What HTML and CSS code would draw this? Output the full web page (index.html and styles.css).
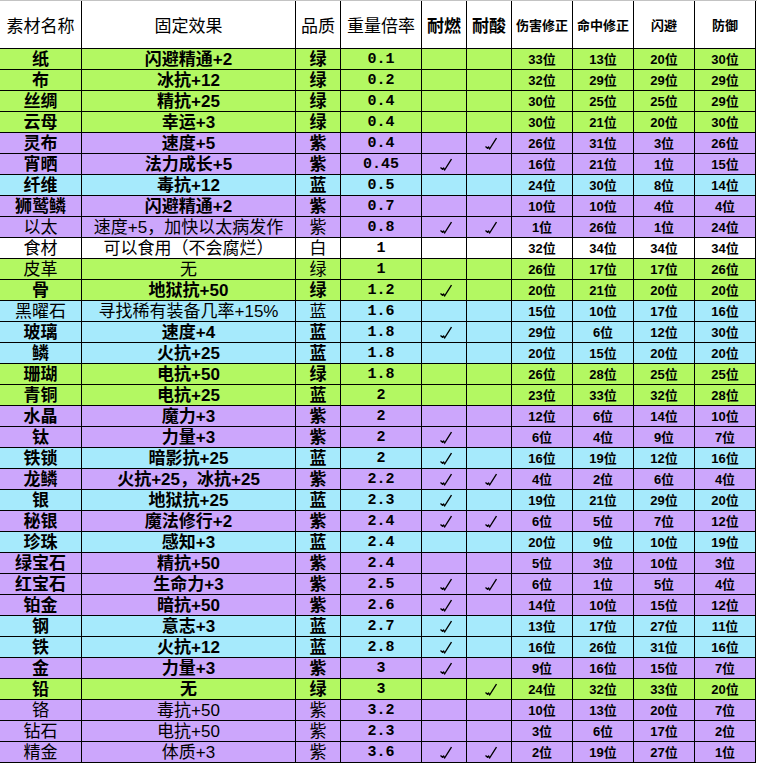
FILE: index.html
```html
<!DOCTYPE html>
<html lang="zh-CN">
<head>
<meta charset="utf-8">
<title>素材表</title>
<link rel="stylesheet" href="styles.css">
</head>
<body>
<div class="sheet">
<div class="grid">
<div class="row head"><div>素材名称</div><div>固定效果</div><div>品质</div><div>重量倍率</div><div class="bd">耐燃</div><div class="bd">耐酸</div><div class="sm">伤害修正</div><div class="sm">命中修正</div><div class="sm">闪避</div><div class="sm">防御</div></div>
<div class="row g"><div>纸</div><div>闪避精通+2</div><div>绿</div><div>0.1</div><div></div><div></div><div>33位</div><div>13位</div><div>20位</div><div>30位</div></div>
<div class="row g"><div>布</div><div>冰抗+12</div><div>绿</div><div>0.2</div><div></div><div></div><div>32位</div><div>29位</div><div>29位</div><div>29位</div></div>
<div class="row g"><div>丝绸</div><div>精抗+25</div><div>绿</div><div>0.4</div><div></div><div></div><div>30位</div><div>25位</div><div>25位</div><div>29位</div></div>
<div class="row g"><div>云母</div><div>幸运+3</div><div>绿</div><div>0.4</div><div></div><div></div><div>30位</div><div>21位</div><div>20位</div><div>30位</div></div>
<div class="row p"><div>灵布</div><div>速度+5</div><div>紫</div><div>0.4</div><div></div><div><svg class="ck" viewBox="0 0 12 13"><path d="M0.5 9.5 2.5 11.2 3.6 10 4.6 12 11.5 1"/></svg></div><div>26位</div><div>31位</div><div>3位</div><div>26位</div></div>
<div class="row p"><div>宵晒</div><div>法力成长+5</div><div>紫</div><div>0.45</div><div><svg class="ck" viewBox="0 0 12 13"><path d="M0.5 9.5 2.5 11.2 3.6 10 4.6 12 11.5 1"/></svg></div><div></div><div>16位</div><div>21位</div><div>1位</div><div>15位</div></div>
<div class="row b"><div>纤维</div><div>毒抗+12</div><div>蓝</div><div>0.5</div><div></div><div></div><div>24位</div><div>30位</div><div>8位</div><div>14位</div></div>
<div class="row p"><div>狮鹫鳞</div><div>闪避精通+2</div><div>紫</div><div>0.7</div><div></div><div></div><div>10位</div><div>10位</div><div>4位</div><div>4位</div></div>
<div class="row p thin"><div>以太</div><div>速度+5，加快以太病发作</div><div>紫</div><div>0.8</div><div><svg class="ck" viewBox="0 0 12 13"><path d="M0.5 9.5 2.5 11.2 3.6 10 4.6 12 11.5 1"/></svg></div><div><svg class="ck" viewBox="0 0 12 13"><path d="M0.5 9.5 2.5 11.2 3.6 10 4.6 12 11.5 1"/></svg></div><div>1位</div><div>26位</div><div>1位</div><div>24位</div></div>
<div class="row w thin"><div>食材</div><div>可以食用（不会腐烂）</div><div>白</div><div>1</div><div></div><div></div><div>32位</div><div>34位</div><div>34位</div><div>34位</div></div>
<div class="row g thin"><div>皮革</div><div>无</div><div>绿</div><div>1</div><div></div><div></div><div>26位</div><div>17位</div><div>17位</div><div>26位</div></div>
<div class="row g"><div>骨</div><div>地狱抗+50</div><div>绿</div><div>1.2</div><div><svg class="ck" viewBox="0 0 12 13"><path d="M0.5 9.5 2.5 11.2 3.6 10 4.6 12 11.5 1"/></svg></div><div></div><div>20位</div><div>21位</div><div>20位</div><div>20位</div></div>
<div class="row b thin"><div>黑曜石</div><div>寻找稀有装备几率+15%</div><div>蓝</div><div>1.6</div><div></div><div></div><div>15位</div><div>10位</div><div>17位</div><div>16位</div></div>
<div class="row b"><div>玻璃</div><div>速度+4</div><div>蓝</div><div>1.8</div><div><svg class="ck" viewBox="0 0 12 13"><path d="M0.5 9.5 2.5 11.2 3.6 10 4.6 12 11.5 1"/></svg></div><div></div><div>29位</div><div>6位</div><div>12位</div><div>30位</div></div>
<div class="row b"><div>鳞</div><div>火抗+25</div><div>蓝</div><div>1.8</div><div></div><div></div><div>20位</div><div>15位</div><div>20位</div><div>20位</div></div>
<div class="row g"><div>珊瑚</div><div>电抗+50</div><div>绿</div><div>1.8</div><div></div><div></div><div>26位</div><div>28位</div><div>25位</div><div>25位</div></div>
<div class="row g"><div>青铜</div><div>电抗+25</div><div>蓝</div><div>2</div><div></div><div></div><div>23位</div><div>33位</div><div>32位</div><div>28位</div></div>
<div class="row p"><div>水晶</div><div>魔力+3</div><div>紫</div><div>2</div><div></div><div></div><div>12位</div><div>6位</div><div>14位</div><div>10位</div></div>
<div class="row p"><div>钛</div><div>力量+3</div><div>紫</div><div>2</div><div><svg class="ck" viewBox="0 0 12 13"><path d="M0.5 9.5 2.5 11.2 3.6 10 4.6 12 11.5 1"/></svg></div><div></div><div>6位</div><div>4位</div><div>9位</div><div>7位</div></div>
<div class="row b"><div>铁锁</div><div>暗影抗+25</div><div>蓝</div><div>2</div><div><svg class="ck" viewBox="0 0 12 13"><path d="M0.5 9.5 2.5 11.2 3.6 10 4.6 12 11.5 1"/></svg></div><div></div><div>16位</div><div>19位</div><div>12位</div><div>16位</div></div>
<div class="row p"><div>龙鳞</div><div>火抗+25，冰抗+25</div><div>紫</div><div>2.2</div><div><svg class="ck" viewBox="0 0 12 13"><path d="M0.5 9.5 2.5 11.2 3.6 10 4.6 12 11.5 1"/></svg></div><div><svg class="ck" viewBox="0 0 12 13"><path d="M0.5 9.5 2.5 11.2 3.6 10 4.6 12 11.5 1"/></svg></div><div>4位</div><div>2位</div><div>6位</div><div>4位</div></div>
<div class="row b"><div>银</div><div>地狱抗+25</div><div>蓝</div><div>2.3</div><div><svg class="ck" viewBox="0 0 12 13"><path d="M0.5 9.5 2.5 11.2 3.6 10 4.6 12 11.5 1"/></svg></div><div></div><div>19位</div><div>21位</div><div>29位</div><div>20位</div></div>
<div class="row p"><div>秘银</div><div>魔法修行+2</div><div>紫</div><div>2.4</div><div><svg class="ck" viewBox="0 0 12 13"><path d="M0.5 9.5 2.5 11.2 3.6 10 4.6 12 11.5 1"/></svg></div><div><svg class="ck" viewBox="0 0 12 13"><path d="M0.5 9.5 2.5 11.2 3.6 10 4.6 12 11.5 1"/></svg></div><div>6位</div><div>5位</div><div>7位</div><div>12位</div></div>
<div class="row b"><div>珍珠</div><div>感知+3</div><div>蓝</div><div>2.4</div><div></div><div></div><div>20位</div><div>9位</div><div>10位</div><div>19位</div></div>
<div class="row p"><div>绿宝石</div><div>精抗+50</div><div>紫</div><div>2.4</div><div></div><div></div><div>5位</div><div>3位</div><div>10位</div><div>3位</div></div>
<div class="row p"><div>红宝石</div><div>生命力+3</div><div>紫</div><div>2.5</div><div><svg class="ck" viewBox="0 0 12 13"><path d="M0.5 9.5 2.5 11.2 3.6 10 4.6 12 11.5 1"/></svg></div><div><svg class="ck" viewBox="0 0 12 13"><path d="M0.5 9.5 2.5 11.2 3.6 10 4.6 12 11.5 1"/></svg></div><div>6位</div><div>1位</div><div>5位</div><div>4位</div></div>
<div class="row p"><div>铂金</div><div>暗抗+50</div><div>紫</div><div>2.6</div><div><svg class="ck" viewBox="0 0 12 13"><path d="M0.5 9.5 2.5 11.2 3.6 10 4.6 12 11.5 1"/></svg></div><div></div><div>14位</div><div>10位</div><div>15位</div><div>12位</div></div>
<div class="row b"><div>钢</div><div>意志+3</div><div>蓝</div><div>2.7</div><div><svg class="ck" viewBox="0 0 12 13"><path d="M0.5 9.5 2.5 11.2 3.6 10 4.6 12 11.5 1"/></svg></div><div></div><div>13位</div><div>17位</div><div>27位</div><div>11位</div></div>
<div class="row b"><div>铁</div><div>火抗+12</div><div>蓝</div><div>2.8</div><div><svg class="ck" viewBox="0 0 12 13"><path d="M0.5 9.5 2.5 11.2 3.6 10 4.6 12 11.5 1"/></svg></div><div></div><div>16位</div><div>26位</div><div>31位</div><div>16位</div></div>
<div class="row p"><div>金</div><div>力量+3</div><div>紫</div><div>3</div><div><svg class="ck" viewBox="0 0 12 13"><path d="M0.5 9.5 2.5 11.2 3.6 10 4.6 12 11.5 1"/></svg></div><div></div><div>9位</div><div>16位</div><div>15位</div><div>7位</div></div>
<div class="row g"><div>铅</div><div>无</div><div>绿</div><div>3</div><div></div><div><svg class="ck" viewBox="0 0 12 13"><path d="M0.5 9.5 2.5 11.2 3.6 10 4.6 12 11.5 1"/></svg></div><div>24位</div><div>32位</div><div>33位</div><div>20位</div></div>
<div class="row p thin"><div>铬</div><div>毒抗+50</div><div>紫</div><div>3.2</div><div></div><div></div><div>10位</div><div>13位</div><div>20位</div><div>7位</div></div>
<div class="row p thin"><div>钻石</div><div>电抗+50</div><div>紫</div><div>2.3</div><div></div><div></div><div>3位</div><div>6位</div><div>17位</div><div>2位</div></div>
<div class="row p thin"><div>精金</div><div>体质+3</div><div>紫</div><div>3.6</div><div><svg class="ck" viewBox="0 0 12 13"><path d="M0.5 9.5 2.5 11.2 3.6 10 4.6 12 11.5 1"/></svg></div><div><svg class="ck" viewBox="0 0 12 13"><path d="M0.5 9.5 2.5 11.2 3.6 10 4.6 12 11.5 1"/></svg></div><div>2位</div><div>19位</div><div>27位</div><div>1位</div></div>
</div>
</div>
</body>
</html>
```
FILE: styles.css
```css
* { box-sizing: border-box; }

body {
  margin: 0;
  background: #ffffff;
  color: #000000;
  font-family: "Noto Sans CJK SC", sans-serif;
}

.sheet {
  border-top: 1px solid #c3c3c3;
}

.grid {
  display: grid;
  width: max-content;
  grid-template-columns: 81px 213px 44px 80px 44px 44px 60px 60px 60px 60px;
  grid-template-rows: 47px;
  grid-auto-rows: 20px;
  gap: 1px;
  padding: 0 1px 1px 0;
  background: #000000;
}

.row {
  display: contents;
}

.row > div {
  display: flex;
  align-items: center;
  justify-content: center;
  white-space: nowrap;
  line-height: 1;
  font-size: 17px;
  font-weight: 700;
  font-family: "Liberation Sans", "Noto Sans CJK SC", sans-serif;
}

.row > :nth-child(4) {
  font-family: "Liberation Mono", monospace;
  font-size: 15px;
  font-weight: 700;
}

.row > :nth-child(n+7) {
  font-size: 13px;
  font-weight: 700;
}

.thin > :nth-child(-n+3) {
  font-weight: 400;
}

.head > div {
  background: #ffffff;
  font-family: "Noto Sans CJK SC", sans-serif;
  font-size: 17px;
  font-weight: 400;
}

.head > div:nth-child(4) {
  font-family: "Noto Sans CJK SC", sans-serif;
  font-size: 17px;
  font-weight: 400;
}

.head > .bd {
  font-weight: 700;
}

.head > .sm {
  font-size: 13px;
  font-weight: 700;
}

.g > div { background: #b3f862; }
.p > div { background: #cca6fc; }
.b > div { background: #a6eafc; }
.w > div { background: #ffffff; }

.ck {
  width: 12px;
  height: 13px;
  margin-left: 4px;
  fill: none;
  stroke: #000000;
  stroke-width: 1.4;
  stroke-linejoin: round;
}
```
